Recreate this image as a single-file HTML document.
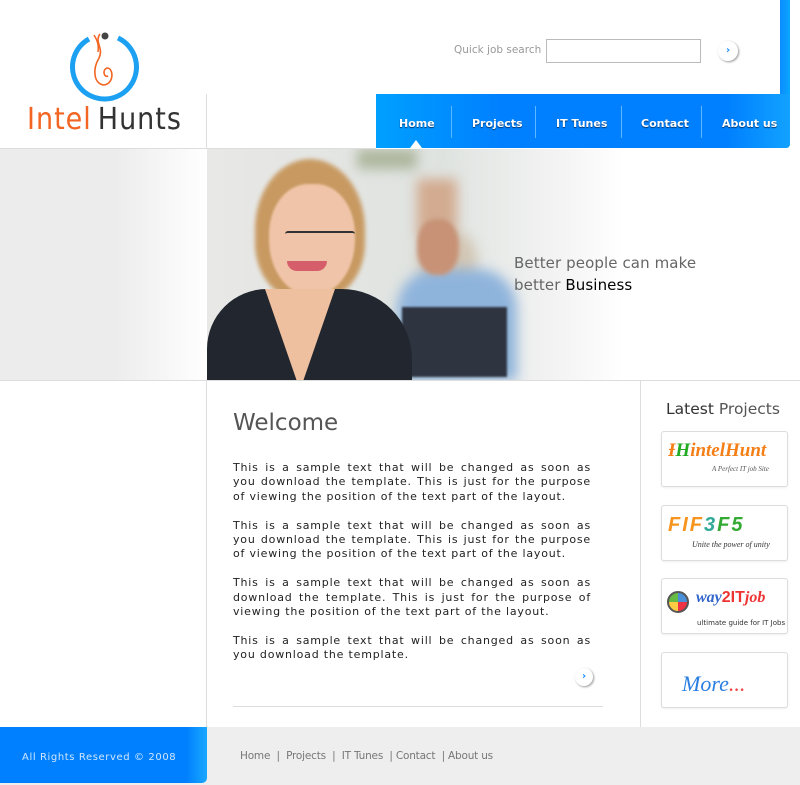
<!DOCTYPE html>
<html><head><meta charset="utf-8"><style>
*{margin:0;padding:0;box-sizing:border-box}
body{width:800px;height:785px;position:relative;background:#fff;font-family:"DejaVu Sans","Liberation Sans",sans-serif;overflow:hidden}
.a{position:absolute}
.nav a{position:absolute;top:117px;color:#fff;font-size:11px;font-weight:bold;text-shadow:0 1px 1px #036;text-decoration:none}
.sep{position:absolute;top:106px;width:1px;height:32px;background:#5ab8ff}
p.t{font-size:11px;color:#222;letter-spacing:0.8px;line-height:14.4px;margin-bottom:14.4px;width:358px;text-align:justify}
.box{position:absolute;left:661px;width:127px;height:56px;border:1px solid #ddd;border-radius:3px;background:#fff;box-shadow:0 1px 2px #eee}
</style></head><body>
<!-- logo -->
<svg class="a" style="left:62px;top:28px" width="90" height="80" viewBox="0 0 90 80">
<path d="M27 11 A32 32 0 1 0 56 10" fill="none" stroke="#1ba0f2" stroke-width="5"/>
<circle cx="43" cy="8" r="3.5" fill="#444"/>
<path d="M38 6 C32 14,42 20,37 30 C30 42,32 56,42 57 C52 56,52 40,45 40 C40 42,42 50,46 48" fill="none" stroke="#f26522" stroke-width="1.6"/>
<path d="M32 7 C35 12,37 16,36 24" fill="none" stroke="#f26522" stroke-width="1.5"/>
</svg>
<div class="a" style="left:27px;top:102px;font-size:30px;font-family:'DejaVu Sans Condensed','DejaVu Sans',sans-serif;letter-spacing:1px;white-space:nowrap"><span style="color:#f26522">Intel</span><span style="color:#333;margin-left:6px">Hunts</span></div>
<div class="a" style="left:206px;top:94px;width:1px;height:54px;background:#ddd"></div>
<div class="a" style="left:0;top:148px;width:376px;height:1px;background:#ddd"></div>
<!-- search -->
<div class="a" style="left:454px;top:44px;font-size:10.5px;color:#999">Quick job search</div>
<div class="a" style="left:546px;top:39px;width:155px;height:24px;border:1px solid #bbb"></div>
<div class="a" style="left:718px;top:41px;width:20px;height:20px;border-radius:50%;background:#fff;box-shadow:1px 1px 2px #999;color:#1a8cff;font-size:10px;text-align:center;line-height:19px;font-weight:bold">›</div>
<!-- blue strip & nav -->
<div class="a" style="left:780px;top:0;width:10px;height:148px;background:linear-gradient(90deg,#0a8cff,#0aa6ff);border-radius:0 0 4px 4px"></div>
<div class="a" style="left:376px;top:94px;width:414px;height:54px;background:linear-gradient(90deg,#00a0ff,#0080ff 30%,#0080ff 85%,#12a2ff);border-radius:0 0 4px 0"></div>
<div class="nav">
<a style="left:399px">Home</a><div class="sep" style="left:451px"></div>
<a style="left:472px">Projects</a><div class="sep" style="left:535px"></div>
<a style="left:556px">IT Tunes</a><div class="sep" style="left:621px"></div>
<a style="left:641px">Contact</a><div class="sep" style="left:701px"></div>
<a style="left:722px">About us</a>
</div>
<div class="a" style="left:410px;top:140px;width:0;height:0;border-left:6px solid transparent;border-right:6px solid transparent;border-bottom:8px solid #fff"></div>
<!-- banner -->
<div class="a" style="left:0;top:149px;width:207px;height:231px;background:linear-gradient(90deg,#ececec 55%,#fff)"></div>
<div class="a" style="left:207px;top:149px;width:593px;height:231px;overflow:hidden;background:linear-gradient(90deg,#e8e8e6,#dfe3e0 40%,#f4f4f4 60%,#fff 70%)">
 <div class="a" style="left:0;top:0;width:400px;height:231px;filter:blur(6px)">
  <div class="a" style="left:150px;top:0;width:60px;height:20px;background:#7a8a5a;opacity:.5"></div>
  <div class="a" style="left:210px;top:30px;width:40px;height:60px;background:#c9855a;opacity:.6"></div>
  <div class="a" style="left:210px;top:80px;width:60px;height:60px;background:#d2c6b4;border-radius:50%"></div>
  <div class="a" style="left:190px;top:120px;width:120px;height:111px;background:#8fb4dc;border-radius:40px 40px 0 0"></div>
 </div>
 <div class="a" style="left:210px;top:70px;width:42px;height:56px;background:#c79276;border-radius:45%;filter:blur(2px)"></div>
 <div class="a" style="left:195px;top:158px;width:105px;height:70px;background:#2e3440;filter:blur(1px)"></div>
 <div class="a" style="left:48px;top:10px;width:110px;height:140px;background:#c89a62;border-radius:50% 50% 40% 40%;filter:blur(2px)"></div>
 <div class="a" style="left:62px;top:35px;width:86px;height:112px;background:#f0c4a8;border-radius:45% 45% 50% 50%;filter:blur(1px)"></div>
 <div class="a" style="left:78px;top:82px;width:70px;height:10px;border-top:2px solid #333;border-radius:3px"></div>
 <div class="a" style="left:80px;top:112px;width:40px;height:10px;background:#d65e6a;border-radius:0 0 20px 20px"></div>
 <div class="a" style="left:0;top:140px;width:205px;height:91px;background:#22262e;border-radius:60px 70px 0 0"></div>
 <div class="a" style="left:58px;top:140px;width:70px;height:91px;background:#efc0a0;clip-path:polygon(0 0,100% 0,55% 100%,45% 100%)"></div>
 <div class="a" style="left:307px;top:103px;font-size:15px;color:#666;line-height:22px;letter-spacing:.1px">Better people can make<br>better <span style="color:#000">Business</span></div>
</div>
<div class="a" style="left:0;top:380px;width:800px;height:1px;background:#ddd"></div>
<!-- main -->
<div class="a" style="left:206px;top:381px;width:1px;height:346px;background:#ddd"></div>
<div class="a" style="left:640px;top:381px;width:1px;height:346px;background:#ddd"></div>
<div class="a" style="left:233px;top:410px;font-size:23px;color:#555">Welcome</div>
<div class="a" style="left:233px;top:461px">
<p class="t">This is a sample text that will be changed as soon as you download the template. This is just for the purpose of viewing the position of the text part of the layout.</p>
<p class="t">This is a sample text that will be changed as soon as you download the template. This is just for the purpose of viewing the position of the text part of the layout.</p>
<p class="t">This is a sample text that will be changed as soon as download the template. This is just for the purpose of viewing the position of the text part of the layout.</p>
<p class="t">This is a sample text that will be changed as soon as you download the template.</p>
</div>
<div class="a" style="left:575px;top:668px;width:18px;height:18px;border-radius:50%;box-shadow:1px 1px 2px #999;color:#1a8cff;font-size:10px;text-align:center;line-height:17px;font-weight:bold">›</div>
<div class="a" style="left:233px;top:706px;width:370px;height:1px;background:#ddd"></div>
<!-- right -->
<div class="a" style="left:666px;top:400px;font-size:15.5px;color:#555"><span style="color:#333">Latest</span> Projects</div>
<div class="box" style="top:431px"><div class="a" style="left:6px;top:8px;font:italic bold 19px 'Liberation Serif',serif;color:#f57f17">Ɨ<span style="color:#2a2">H</span>intelHunt</div><div class="a" style="left:50px;top:33px;font:italic 7px serif;color:#555">A Perfect IT job Site</div></div>
<div class="box" style="top:505px"><div class="a" style="left:6px;top:8px;font:italic bold 20px 'Liberation Sans',sans-serif;letter-spacing:2px"><span style="color:#f7941d">FIF</span><span style="color:#3a9">3</span><span style="color:#3a3">F5</span></div><div class="a" style="left:30px;top:34px;font:italic 8px serif;color:#333">Unite the power of unity</div></div>
<div class="box" style="top:578px"><div class="a" style="left:5px;top:12px;width:22px;height:22px;border-radius:50%;background:conic-gradient(#4a90d9 0 25%,#e34 0 50%,#fc4 0 75%,#6b4 0);border:2px solid #555"></div><div class="a" style="left:34px;top:10px;font:italic bold 16px 'Liberation Serif',serif;color:#36c">way<span style="color:#e33;font-style:normal;font-family:'Liberation Sans'">2IT</span><span style="color:#e33">job</span></div><div class="a" style="left:35px;top:40px;font-size:7px;color:#333">ultimate guide for IT Jobs</div></div>
<div class="box" style="top:652px"><div class="a" style="left:20px;top:18px;font:italic 22px 'Liberation Serif',serif;color:#2a7fe0">More<span style="color:#e44">...</span></div></div>
<!-- footer -->
<div class="a" style="left:0;top:727px;width:800px;height:58px;background:#eee"></div>
<div class="a" style="left:0;top:727px;width:207px;height:56px;background:linear-gradient(90deg,#0080ff 90%,#1aa8ff);border-radius:0 0 5px 0"></div>
<div class="a" style="left:22px;top:752px;font-size:10px;color:#cfe6ff;letter-spacing:.6px">All Rights Reserved © 2008</div>
<div class="a" style="left:240px;top:750px;font-size:10.5px;color:#777;letter-spacing:-.2px">Home &nbsp;| &nbsp;Projects &nbsp;| &nbsp;IT Tunes &nbsp;| Contact &nbsp;| About us</div>
</body></html>
